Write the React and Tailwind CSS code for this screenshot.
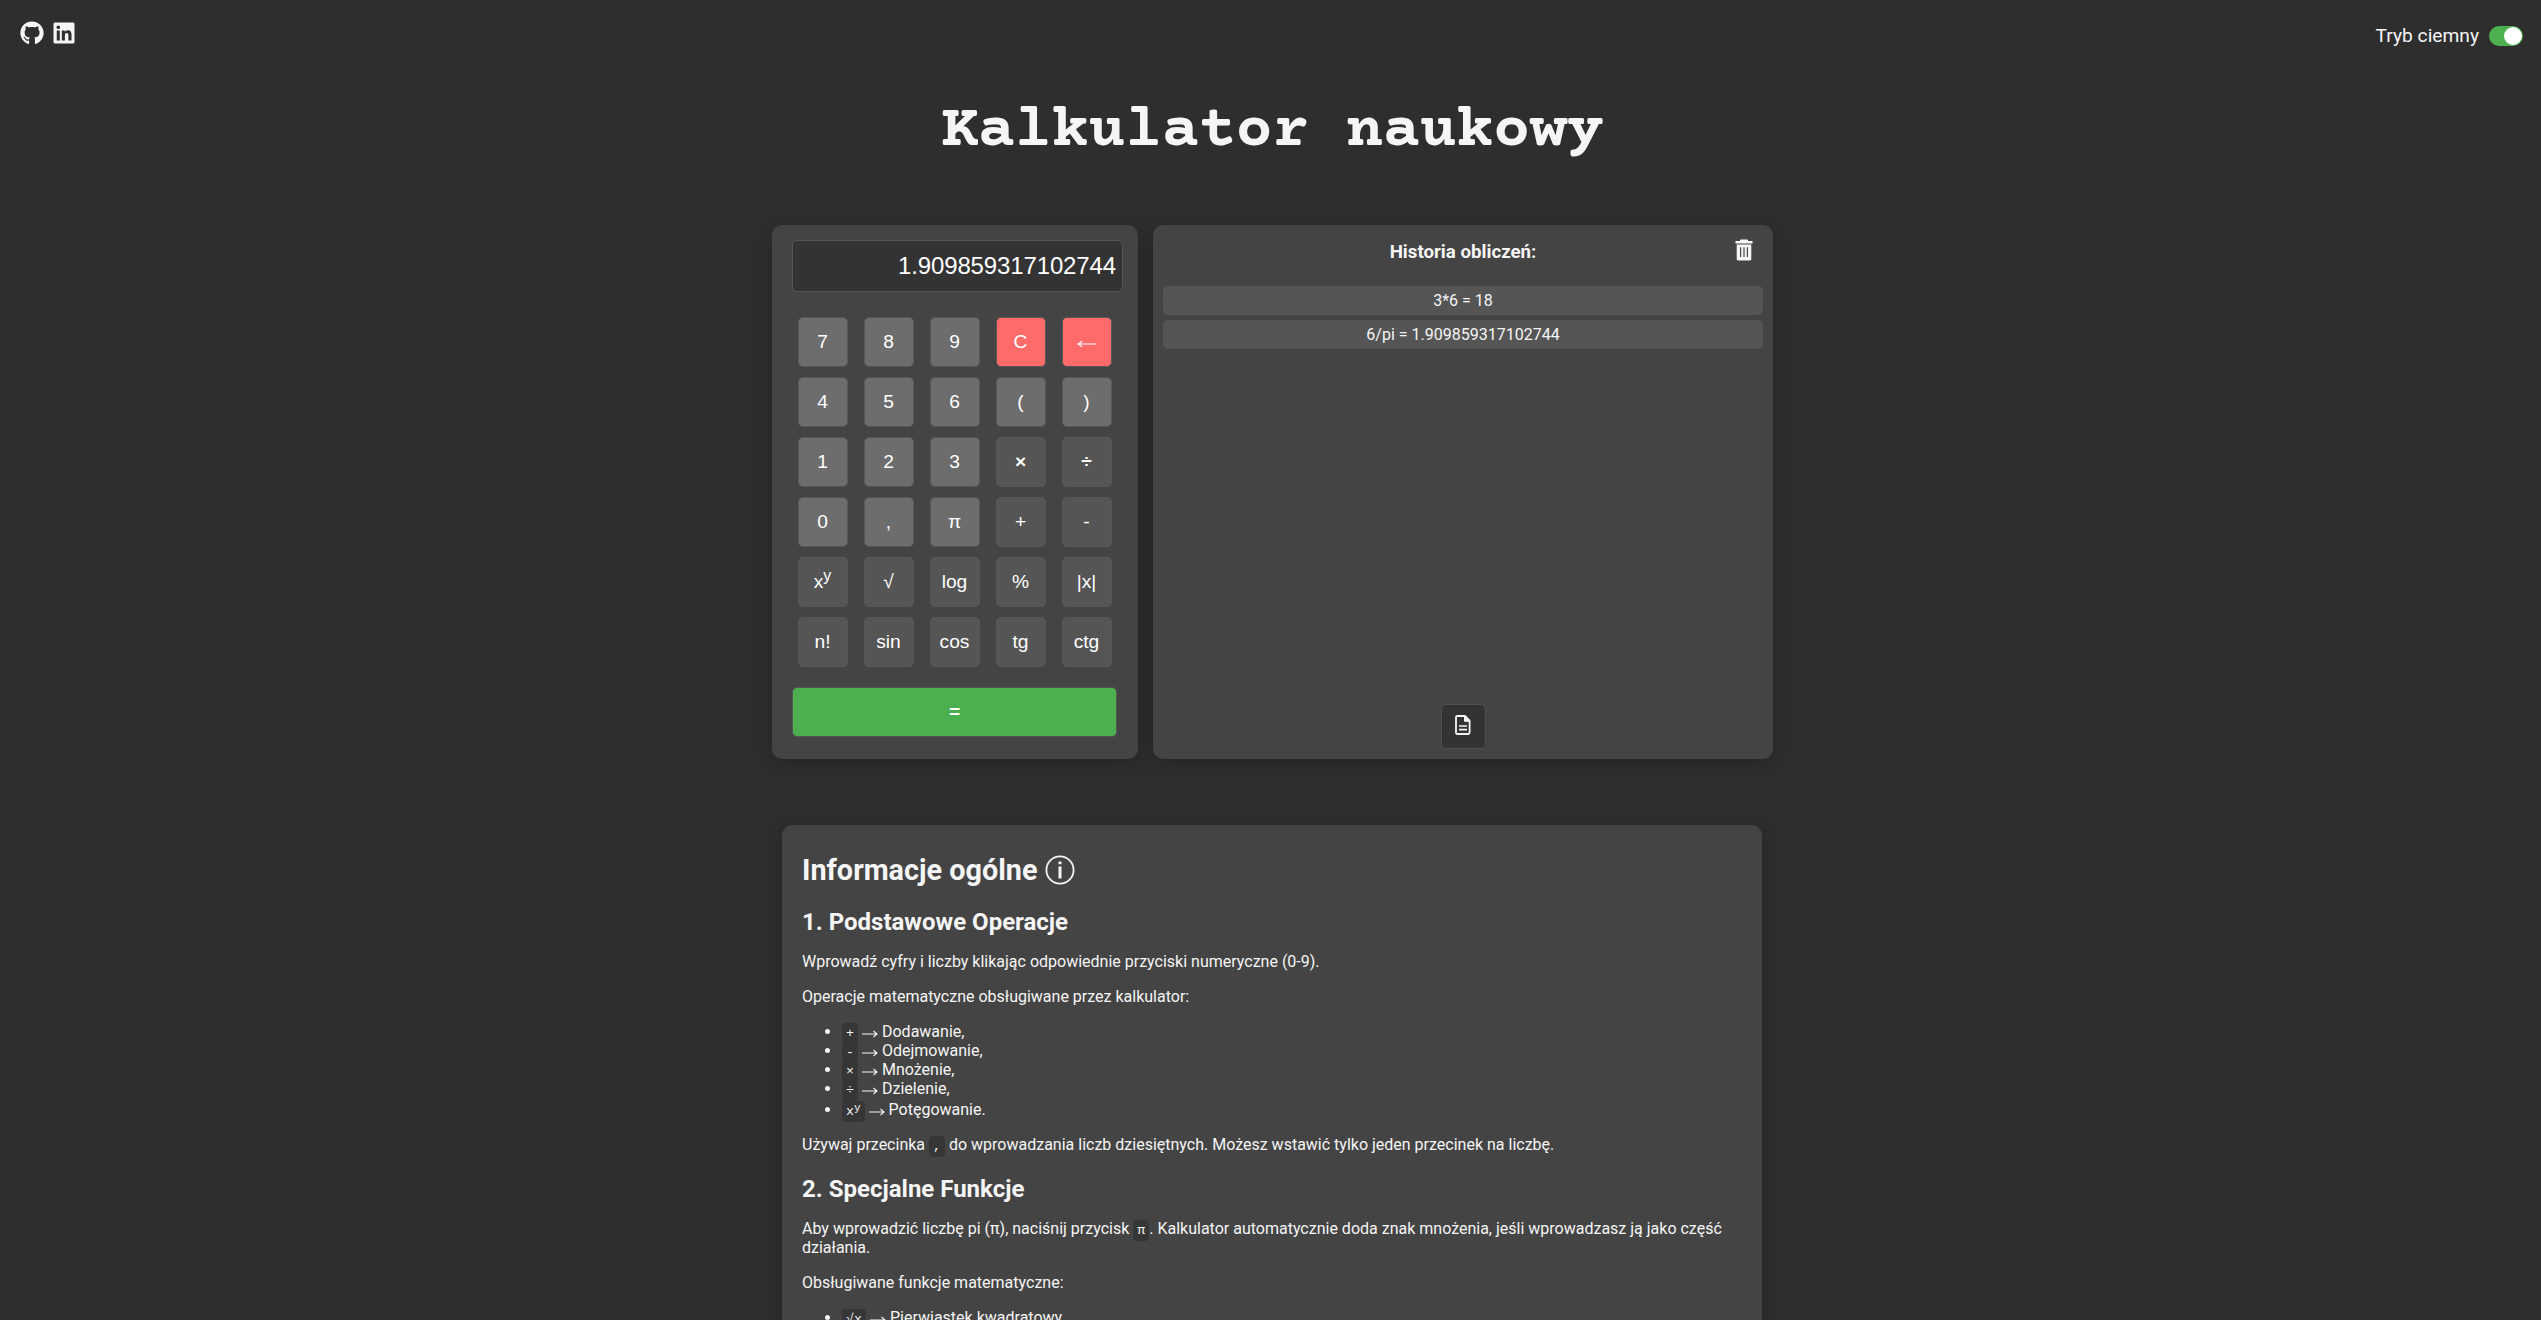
import React from "react";
import { FaGithub, FaLinkedin } from "react-icons/fa";

const keys = [
  ["7", "n"], ["8", "n"], ["9", "n"], ["C", "r"], ["←", "r"],
  ["4", "n"], ["5", "n"], ["6", "n"], ["(", "n"], [")", "n"],
  ["1", "n"], ["2", "n"], ["3", "n"], ["×", "o"], ["÷", "o"],
  ["0", "n"], [",", "n"], ["π", "n"], ["+", "o"], ["-", "o"],
  ["pow", "o"], ["√", "o"], ["log", "o"], ["%", "o"], ["|x|", "o"],
  ["n!", "o"], ["sin", "o"], ["cos", "o"], ["tg", "o"], ["ctg", "o"],
];

const tones = {
  n: "bg-[#6d6d6d]",
  o: "bg-[#555555]",
  r: "bg-[#ff6b6b]",
};

const card = "rounded-[10px] bg-[#444444] shadow-[0_4px_20px_rgba(0,0,0,0.2)]";

function Power() {
  return (
    <span>x<sup className="relative top-[-0.4em] align-baseline text-[0.83em] leading-none">y</sup></span>
  );
}

function Code({ children }) {
  return (
    <code className="rounded-[4px] bg-[#363636] px-1 py-[3px] font-['Liberation_Mono',monospace] text-[13.3px] leading-none">
      {children}
    </code>
  );
}

function Arrow() {
  return (
    <svg className="mx-1 inline-block h-[8px] w-[16px] align-[-1px]" viewBox="0 0 16 8" fill="none" stroke="#f5f5f5" strokeWidth="1.1">
      <path d="M0 4H15M11.5 1L15 4L11.5 7" />
    </svg>
  );
}

function BackArrow() {
  return (
    <svg className="mt-[3px] h-[8px] w-[19px]" viewBox="0 0 19 8" fill="none" stroke="#ffffff" strokeWidth="1.2">
      <path d="M19 4H1.500M5 .8Q4 3 1 4Q4 5 5 7.200" />
    </svg>
  );
}

function KeyLabel({ name }) {
  if (name === "pow") return <Power />;
  if (name === "←") return <BackArrow />;
  if (name === "×" || name === "÷") return <span className="font-bold">{name}</span>;
  return name;
}

function Item({ code, label }) {
  return (
    <li>
      <Code>{code}</Code>
      <Arrow />
      {label}
    </li>
  );
}

function TrashIcon() {
  return (
    <svg className="h-[22px] w-[18px]" viewBox="0 0 18 22" fill="#f5f5f5">
      <path d="M5 1.2Q5 .5 6 .5h6q1 0 1 .7V2h4.5v2.6H.5V2H5z" />
      <path fillRule="evenodd" d="M1.7 5.6h14.6V20q0 1.5-1.5 1.5H3.200Q1.700 21.500 1.700 20zM5 8.300v9.700h1.200V8.300zM8.400 8.300v9.700h1.200V8.300zM11.800 8.300v9.700H13V8.300z" />
    </svg>
  );
}

function FileIcon() {
  return (
    <svg className="h-[20px] w-[16px]" viewBox="0 0 16 20" fill="none" stroke="#f5f5f5" strokeWidth="1.8">
      <path d="M2.500 1H10L14.600 5.700V17.500Q14.600 19 13.100 19H2.500Q1 19 1 17.500V2.500Q1 1 2.500 1Z" />
      <path d="M9.500 1V6.300H14.600L10 1.500Z" fill="#f5f5f5" strokeWidth="1" />
      <path d="M4 11H12M4 14.700H12" strokeWidth="1.700" />
    </svg>
  );
}

export default function App() {
  return (
    <div className="h-[1320px] overflow-hidden bg-[#2e2e2e] font-[Roboto,sans-serif] text-[#f5f5f5]">
      <header className="flex h-[70px] items-start justify-between pl-5 pr-[18px]">
        <div className="flex gap-[9px] pt-[21px]">
          <FaGithub className="h-6 w-6" />
          <FaLinkedin className="h-6 w-[22px]" />
        </div>
        <div className="flex items-center gap-[10px] pt-[26px]">
          <span className="text-[19.2px] leading-5">Tryb ciemny</span>
          <div className="flex h-5 w-[34px] items-center justify-end rounded-full bg-[#4caf50] pr-px">
            <div className="h-[18px] w-[18px] rounded-full bg-white" />
          </div>
        </div>
      </header>

      <div className="flex flex-col items-center pl-[4px]">
        <h1 className="h-[155px] pt-[26px] font-['Courier_Prime','Liberation_Mono',monospace] text-[61.4px] font-bold leading-[72px]">
          Kalkulator naukowy
        </h1>

        <main className="flex h-[534px] gap-[15px]">
          <section className={`w-[366px] pl-5 pt-[15px] ${card}`}>
            <div className="flex h-[52px] w-[331px] items-center justify-end rounded-[5px] border border-[#555555] bg-[#333333] pr-[6px] font-['Liberation_Sans',sans-serif] text-2xl tracking-[-0.13px] text-white">
              1.909859317102744
            </div>
            <div className="mt-[25px] grid w-fit grid-cols-[repeat(5,50px)] gap-x-4 gap-y-[10px] pl-[6px] font-['Liberation_Sans',sans-serif] text-[19.2px] text-white">
              {keys.map(([k, t]) => (
                <button key={k} className={`flex h-[50px] w-[50px] items-center justify-center rounded-[5px] border border-[#585858] pr-px ${tones[t]}`}>
                  <KeyLabel name={k} />
                </button>
              ))}
            </div>
            <button className="mt-5 flex h-[50px] w-[325px] items-center justify-center rounded-[5px] border border-[#555555] bg-[#4caf50] font-['Liberation_Sans',sans-serif] text-[19.2px] font-bold text-white">
              =
            </button>
          </section>

          <section className={`flex w-[620px] flex-col px-[10px] ${card}`}>
            <div className="grid h-[61px] grid-cols-[1fr_auto_1fr] items-start pt-[14px]">
              <h2 className="col-start-2 pt-px text-[18.7px] font-bold leading-6">Historia obliczeń:</h2>
              <div className="flex justify-end pr-[10px]"><TrashIcon /></div>
            </div>
            <div className="flex flex-col gap-[5px] text-center text-base leading-[29px]">
              <div className="h-[29px] rounded-[5px] bg-[#555555]">3*6 = 18</div>
              <div className="h-[29px] rounded-[5px] bg-[#555555]">6/pi = 1.909859317102744</div>
            </div>
            <button className="mb-[10px] mt-auto flex h-[45px] w-[45px] items-center justify-center self-center rounded-[5px] border border-[#505050] bg-[#333333] pb-1">
              <FileIcon />
            </button>
          </section>
        </main>

        <article className={`mr-[1px] mt-[66px] h-[1200px] w-[980px] shrink-0 px-5 pt-[28px] text-base leading-[19px] ${card}`}>
          <h2 className="flex items-center gap-[7px] text-[28.8px] font-bold leading-[34px]">
            Informacje ogólne
            <svg className="h-[30px] w-[30px]" viewBox="0 0 30 30" fill="none" stroke="#f5f5f5" strokeWidth="1.800">
              <circle cx="15" cy="15" r="13.600" />
              <path d="M15 11.500V23.500M15 6.500V9.200" strokeWidth="3" />
            </svg>
          </h2>
          <h3 className="mt-[21px] text-2xl font-bold leading-7">1. Podstawowe Operacje</h3>
          <p className="mt-4">Wprowadź cyfry i liczby klikając odpowiednie przyciski numeryczne (0-9).</p>
          <p className="mt-4">Operacje matematyczne obsługiwane przez kalkulator:</p>
          <ul className="mt-4 list-disc pl-10">
            <Item code="+" label="Dodawanie," />
            <Item code="-" label="Odejmowanie," />
            <Item code="×" label="Mnożenie," />
            <Item code="÷" label="Dzielenie," />
            <li className="pt-[2px]"><Code><Power /></Code><Arrow />Potęgowanie.</li>
          </ul>
          <p className="mt-4">Używaj przecinka <Code>,</Code> do wprowadzania liczb dziesiętnych. Możesz wstawić tylko jeden przecinek na liczbę.</p>
          <h3 className="mt-[21px] text-2xl font-bold leading-7">2. Specjalne Funkcje</h3>
          <p className="mt-4">Aby wprowadzić liczbę pi (π), naciśnij przycisk <Code>π</Code>. Kalkulator automatycznie doda znak mnożenia, jeśli wprowadzasz ją jako część działania.</p>
          <p className="mt-4">Obsługiwane funkcje matematyczne:</p>
          <ul className="mt-4 list-disc pl-10">
            <Item code="√x" label="Pierwiastek kwadratowy," />
          </ul>
        </article>
      </div>
    </div>
  );
}
